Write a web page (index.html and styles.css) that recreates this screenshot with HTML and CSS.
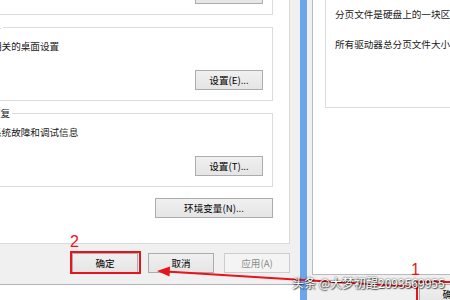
FILE: index.html
```html
<!DOCTYPE html>
<html lang="zh-cn">
<head>
  <meta charset="UTF-8">
  <title>系统属性</title>
  <link rel="stylesheet" href="styles.css">
</head>
<body>
  <div id="screen">
    <!-- 系统属性 - 高级 -->
    <div class="dlg" id="sysprop">
      <div class="tabpage">
        <fieldset class="grp">
          <legend>性能</legend>
          <p>视觉效果，处理器计划，内存使用，以及虚拟内存</p>
          <div class="grp-btns"><button class="btn">设置(S)...</button></div>
        </fieldset>
        <fieldset class="grp">
          <legend>用户配置文件</legend>
          <p>与登录帐户相关的桌面设置</p>
          <div class="grp-btns"><button class="btn">设置(E)...</button></div>
        </fieldset>
        <fieldset class="grp">
          <legend>启动和故障恢复</legend>
          <p>系统启动、系统故障和调试信息</p>
          <div class="grp-btns"><button class="btn">设置(T)...</button></div>
        </fieldset>
        <div class="grp-btns env"><button class="btn wide">环境变量(N)...</button></div>
      </div>
      <div class="dlg-btns">
        <button class="btn">确定</button>
        <button class="btn">取消</button>
        <button class="btn" disabled>应用(A)</button>
      </div>
    </div>

    <!-- 性能选项 - 高级 -->
    <div class="dlg" id="perfopt">
      <div class="tabpage">
        <div class="grp vm">
          <p>分页文件是硬盘上的一块区域，Windows 当作 RAM 使用。</p>
          <p>所有驱动器总分页文件大小: 4096 MB</p>
        </div>
      </div>
      <div class="dlg-btns">
        <button class="btn">确定</button>
        <button class="btn">取消</button>
        <button class="btn" disabled>应用(A)</button>
      </div>
    </div>

    <!-- 标注 -->
    <svg class="notes" width="450" height="300" viewBox="0 0 450 300">
      <rect x="71" y="252" width="69" height="21" fill="none" stroke="#e8141c" stroke-width="2"/>
      <rect x="417" y="282" width="70" height="24" fill="none" stroke="#e8141c" stroke-width="2"/>
      <line x1="416" y1="287" x2="166" y2="271.5" stroke="#e8141c" stroke-width="2"/>
      <polygon points="157,271 170,266.5 169.5,276.5" fill="#e8141c"/>
    </svg>
    <span class="mark n2">2</span>
    <span class="mark n1">1</span>
    <div class="wm">头条 @大梦初醒2093569955</div>
  </div>
</body>
</html>
```

FILE: styles.css
```css
* {
  box-sizing: border-box;
}
body {
  margin: 0;
  background: #fff;
  font-family: "Noto Sans CJK SC", sans-serif;
  font-size: 9.6px;
  color: #1a1a1a;
}
#screen {
  position: relative;
  width: 450px;
  height: 300px;
  overflow: hidden;
}
.dlg {
  position: absolute;
  background: #f0f0f0;
}
.tabpage {
  background: #fff;
  border: 1px solid #d9d9d9;
}
p {
  margin: 0;
  line-height: 12px;
  white-space: nowrap;
}
.btn {
  width: 68px;
  height: 20px;
  padding: 0;
  font: inherit;
  line-height: 18px;
  color: #000;
  border: 1px solid #acacac;
  background: linear-gradient(#f0f0f0, #e5e5e5);
}
.btn.wide {
  width: 118px;
}
.btn:disabled {
  color: #8d8d8d;
  border-color: #cdcdcd;
  background: #f4f4f4;
}

/* left dialog */
#sysprop {
  left: -80px;
  top: -74px;
  width: 380px;
  padding: 0 10px 0 6px;
  border-bottom: 1px solid #b4b4b4;
}
#sysprop .tabpage {
  display: flex;
  flex-direction: column;
  gap: 6px;
  padding: 8px 16px 25px 8px;
}
.grp {
  margin: 0;
  min-width: 0;
  border: 1px solid #dcdcdc;
  padding: 7px 9px 10px 8px;
}
.grp legend {
  padding: 0 2px;
  margin-left: -3px;
  line-height: 12px;
}
.grp p {
  margin-bottom: 18px;
}
.grp-btns {
  display: flex;
  justify-content: flex-end;
}
.grp-btns.env {
  margin-top: 5px;
}
.dlg-btns {
  display: flex;
  justify-content: flex-end;
  gap: 10px;
  padding: 9px 0 11px;
}
.dlg-btns .btn {
  width: 66px;
}

/* right window */
#perfopt {
  left: 300px;
  top: -21px;
  width: 345px;
  border-left: 7px solid #6ba5ea;
  padding: 0 8px 0 5px;
}
#perfopt .tabpage {
  height: 296px;
  padding: 0 12px;
  border-color: #bababa;
}
.grp.vm {
  padding: 27px 10px 39px 9px;
  overflow: hidden;
}
.grp.vm p + p {
  margin-top: 17px;
}
#perfopt .dlg-btns {
  padding-top: 9px;
}

/* annotations */
.notes {
  position: absolute;
  left: 0;
  top: 0;
}
.mark {
  position: absolute;
  color: #e8141c;
  font-family: "Liberation Sans", sans-serif;
  font-size: 16px;
  line-height: 1;
}
.n2 {
  left: 70px;
  top: 234px;
}
.n1 {
  left: 411px;
  top: 262px;
}
.wm {
  position: absolute;
  left: 292px;
  top: 276px;
  font-size: 12px;
  line-height: 14px;
  color: #fff;
  white-space: nowrap;
  text-shadow: 0 0 2px rgba(0,0,0,0.9), 1px 1px 1px rgba(0,0,0,0.6);
}
```
